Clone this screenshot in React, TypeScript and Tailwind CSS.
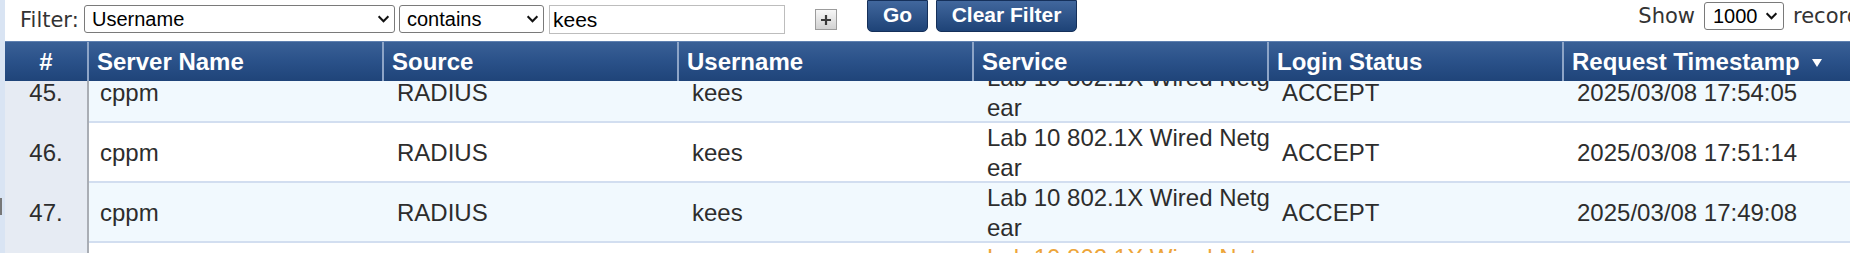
import React from "react";

const cols = "grid grid-cols-[84px_295px_295px_295px_295px_295px_1fr]";

const rows = [
    { n: "45.", ts: "2025/03/08 17:54:05" },
    { n: "46.", ts: "2025/03/08 17:51:14" },
    { n: "47.", ts: "2025/03/08 17:49:08" },
    { n: "48.", ts: "2025/03/08 17:46:52" },
];

const Chevron = () => (
    <svg width="13" height="8" viewBox="0 0 14 9" className="shrink-0">
        <path d="M1.5 1.5 L7 7 L12.5 1.5" fill="none" stroke="#111" strokeWidth="2.3" />
    </svg>
);

const FakeSelect = ({ value, className }: { value: string; className: string }) => (
    <div
        className={`flex items-center justify-between h-[28px] shrink-0 bg-white border border-[#7a7a7a] rounded-[3px] pl-[7px] pr-[4px] text-[20px] text-black font-['Liberation_Sans',Arial,sans-serif] ${className}`}
    >
        <span>{value}</span>
        <Chevron />
    </div>
);

const label = "leading-[28px] text-[21px] text-[#333] font-['DejaVu_Sans',Verdana,sans-serif] shrink-0";

const FilterBar = () => {
    return (
        <div className="flex items-start h-[41px] shrink-0 whitespace-nowrap">
            <span className={`ml-[15px] mt-[6px] w-[64px] ${label}`}>Filter:</span>
            <FakeSelect value="Username" className="mt-[5px] w-[311px]" />
            <FakeSelect value="contains" className="ml-[4px] mt-[5px] w-[145px]" />
            <div className="ml-[5px] mt-[5px] h-[29px] w-[236px] shrink-0 border border-[#bdbdbd] bg-white pl-[3px] leading-[27px] text-[21px] text-black font-['Liberation_Sans',Arial,sans-serif]">
                kees
            </div>
            <div className="ml-[30px] mt-[9px] h-[21px] w-[22px] shrink-0 border border-[#9c9c9c] bg-gradient-to-b from-[#f7f7f7] to-[#d2d2d2] flex items-center justify-center">
                <svg width="12" height="12" viewBox="0 0 12 12">
                    <path d="M6 1 V11 M1 6 H11" stroke="#3a3a3a" strokeWidth="2.2" />
                </svg>
            </div>
            <button className="ml-[30px] h-[32px] w-[61px] shrink-0 rounded-b-[5px] border border-[#15305a] bg-gradient-to-b from-[#41679d] to-[#1e4377] text-white font-bold text-[21px] leading-[28px] pb-[3px] font-['Liberation_Sans',Arial,sans-serif]">
                Go
            </button>
            <button className="ml-[8px] h-[32px] w-[141px] shrink-0 rounded-b-[5px] border border-[#15305a] bg-gradient-to-b from-[#41679d] to-[#1e4377] text-white font-bold text-[21px] leading-[28px] pb-[3px] font-['Liberation_Sans',Arial,sans-serif]">
                Clear Filter
            </button>
            <span className={`ml-[550px] mt-[2px] w-[68px] text-right ${label}`}>Show</span>
            <FakeSelect value="1000" className="ml-[9px] mt-[2px] w-[80px] pl-[8px] pr-[5px]" />
            <span className={`ml-[9px] mt-[2px] ${label}`}>records</span>
        </div>
    );
};

const headers = ["#", "Server Name", "Source", "Username", "Service", "Login Status", "Request Timestamp"];

const HeaderRow = () => (
    <div className={`${cols} h-[40px] shrink-0 bg-gradient-to-b from-[#3a6096] via-[#2a5189] to-[#1f4479] border-t border-[#5f80b0] text-white font-bold text-[24px] leading-[38px]`}>
        {headers.map((h, i) => (
            <div
                key={h}
                className={`flex items-center whitespace-nowrap ${i === 0 ? "justify-center" : "pl-[8px]"} ${i < headers.length - 1 ? "border-r-2 border-[#8ea5c7]" : ""}`}
            >
                {h}
                {i === headers.length - 1 && (
                    <svg width="10" height="8" viewBox="0 0 10 8" className="ml-[12px] mt-[2px]">
                        <path d="M0 0 H10 L5 8 Z" fill="#fff" />
                    </svg>
                )}
            </div>
        ))}
    </div>
);

const Body = () => (
    <div className="flex-1 overflow-hidden">
        {rows.map((r, i) => (
            <div
                key={r.n}
                className={`${cols} h-[60px] border-b-2 border-[#d2def0] text-[24px] ${i % 2 === 0 ? "bg-[#f1f9fe]" : "bg-white"} ${i === 0 ? "-mt-[18px]" : ""} ${i === 3 ? "text-[#eda53a]" : "text-[#2d2d2d]"}`}
            >
                <div className="flex items-center justify-center bg-[#e6ebf3] border-r-2 border-[#a9adb4]">{r.n}</div>
                <div className="flex items-center pl-[11px]">cppm</div>
                <div className="flex items-center pl-[13px]">RADIUS</div>
                <div className="flex items-center pl-[13px]">kees</div>
                <div className="pl-[13px] leading-[30px]">
                    <div className="w-[286px] break-all">Lab 10 802.1X Wired Netgear</div>
                </div>
                <div className="flex items-center pl-[13px]">ACCEPT</div>
                <div className="flex items-center pl-[13px] whitespace-nowrap">{r.ts}</div>
            </div>
        ))}
    </div>
);

export default function App() {
    return (
        <div className="flex w-[1850px] h-[253px] overflow-hidden bg-white font-['Liberation_Sans',Arial,sans-serif]">
            <div className="w-[5px] shrink-0 bg-[#d9e4f3] flex flex-col">
                <div className="mt-[198px] h-[17px] w-[2px] bg-[#777]" />
            </div>
            <div className="flex-1 flex flex-col min-w-0">
                <FilterBar />
                <HeaderRow />
                <Body />
            </div>
        </div>
    );
}
